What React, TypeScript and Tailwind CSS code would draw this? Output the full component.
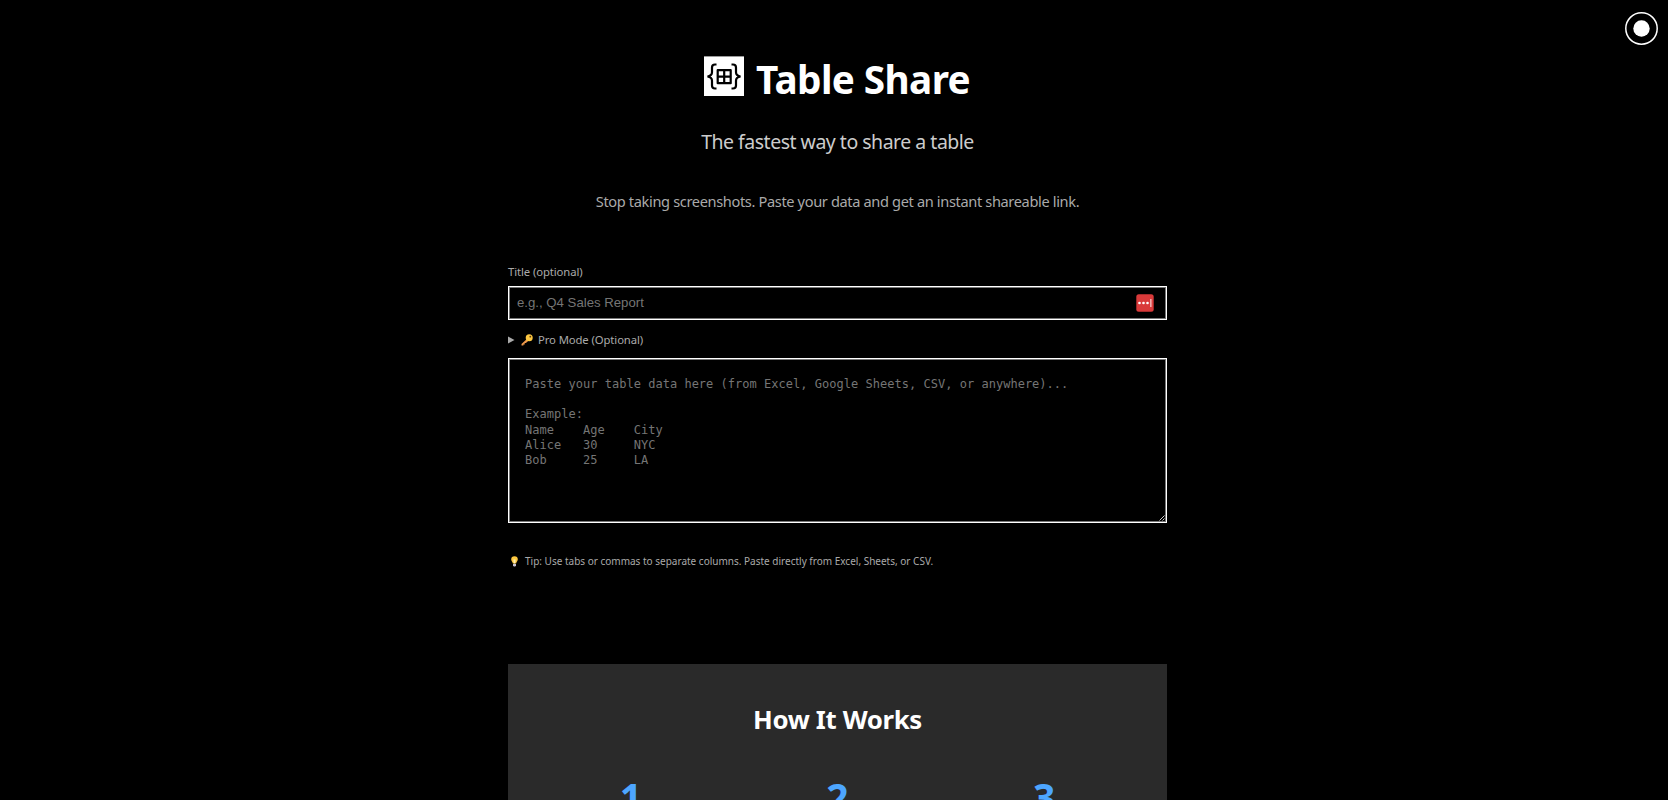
const steps = ["1", "2", "3"];

const placeholder = `Paste your table data here (from Excel, Google Sheets, CSV, or anywhere)...

Example:
Name    Age    City
Alice   30     NYC
Bob     25     LA`;

function Logo() {
  return (
    <svg className="block h-10 w-10 shrink-0" viewBox="0 0 40 40" fill="none" stroke="#000" aria-hidden="true">
      <rect y=".4" width="40" height="39.600" fill="#fff" stroke="none" />
      <path d="M12.500 8.500h-1.500c-2 0-3 1-3 3v4.800c0 2.200-1.500 3.700-4.500 4.200c3 .5 4.500 2 4.500 4.200v4.800c0 2 1 3 3 3h1.500" strokeWidth="2.200" />
      <path d="M27.500 8.500h1.500c2 0 3 1 3 3v4.800c0 2.200 1.500 3.700 4.500 4.200c-3 .5-4.500 2-4.500 4.200v4.800c0 2-1 3-3 3h-1.500" strokeWidth="2.200" />
      <path d="M13.700 14.200h13v13h-13zM20.200 14.200v13M13.700 20.700h13" strokeWidth="2.200" strokeLinejoin="round" />
    </svg>
  );
}

function KeyIcon() {
  return (
    <svg className="block h-3 w-3 shrink-0" viewBox="0 0 12 12" aria-hidden="true">
      <path d="M5.600 5.200L.500 10v1.600h1.900v-1.200h1.300v-1.300h1.200L7.200 7z" fill="#f09a4c" />
      <circle cx="8.200" cy="3.800" r="3.500" fill="#fcc741" />
      <circle cx="9.300" cy="2.700" r=".9" fill="#5a3a10" />
    </svg>
  );
}

function BulbIcon() {
  return (
    <svg className="block h-[11px] w-[7px] shrink-0" viewBox="0 0 7 11" aria-hidden="true">
      <path d="M3.500 .2a3.300 3.300 0 0 0-3.300 3.300c0 1.700 1.500 2.400 1.700 4.100h3.200c.2-1.700 1.700-2.400 1.700-4.100A3.300 3.300 0 0 0 3.500 .2z" fill="#fdc840" />
      <path d="M2.400 3.500h2.200L4.200 7.500H2.800z" fill="#fff0b0" />
      <path d="M2 8h3v1.600l-.8 1H2.800L2 9.600z" fill="#c9c2d6" />
    </svg>
  );
}

export default function App() {
  return (
    <div className="relative h-[800px] w-full overflow-hidden bg-black pt-14 font-['Noto_Sans',sans-serif] text-[#aaa]">
      <button aria-label="Toggle theme" className="absolute top-[11.500px] right-[10.500px] block h-[33px] w-[33px]">
        <svg className="block" width="33" height="33" viewBox="0 0 33 33" fill="none">
          <circle cx="16.500" cy="16.500" r="15.700" stroke="#fff" strokeWidth="1.500" />
          <circle cx="16.500" cy="16.500" r="8.200" fill="#fff" />
        </svg>
      </button>
      <main className="ml-[508px] flex w-[659px] flex-col whitespace-nowrap">
        <header className="flex flex-col items-center">
          <div className="flex h-10 items-start gap-3 pr-px">
            <Logo />
            <h1 className="mt-[3px] text-[38.700px] leading-10 font-bold tracking-[-0.600px] text-white">Table Share</h1>
          </div>
          <p className="mt-8 text-[19.500px] leading-7 tracking-[-0.500px] text-[#ccc]">The fastest way to share a table</p>
          <p className="mt-[34px] text-[14.600px] leading-[22px] tracking-[-0.360px]">
            Stop taking screenshots. Paste your data and get an instant shareable link.
          </p>
        </header>
        <label className="mt-[52px] text-[11.300px] leading-4 tracking-[-0.100px]">Title (optional)</label>
        <div className="mt-1.5 flex h-[34px] items-center justify-between border border-white pr-3 pl-2 shadow-[inset_0_0_0_1px_#777]">
          <span className="font-['Liberation_Sans',sans-serif] text-[13.200px] leading-4 text-[#757575]">e.g., Q4 Sales Report</span>
          <svg className="block" width="18" height="18" viewBox="0 0 18 18" aria-hidden="true">
            <rect x=".3" y=".3" width="17.400" height="17.400" rx="2.500" fill="#d93a3a" />
            <circle cx="3.500" cy="9" r="1.300" fill="#fff" />
            <circle cx="7.500" cy="9" r="1.300" fill="#fff" />
            <circle cx="11.500" cy="9" r="1.300" fill="#fff" />
            <rect x="14.200" y="5" width="1.300" height="8" fill="#f5c4c4" />
          </svg>
        </div>
        <div className="mt-3 flex h-4 items-center">
          <svg className="block" width="7" height="8" viewBox="0 0 7 8" aria-hidden="true">
            <path d="M0 .5L6.500 4L0 7.500z" fill="#aaa" />
          </svg>
          <span className="ml-1.5"><KeyIcon /></span>
          <span className="ml-[5px] text-[11.300px] leading-4 tracking-[-0.100px]">Pro Mode (Optional)</span>
        </div>
        <div className="relative mt-[10px] h-[165px] border border-white px-4 pt-[18px] shadow-[inset_0_0_0_1px_#777]">
          <pre className="font-['DejaVu_Sans_Mono',monospace] text-[12px] leading-[15.200px] tracking-[0.020px] text-[#757575]">{placeholder}</pre>
          <svg className="absolute right-px bottom-px" width="6" height="6" viewBox="0 0 6 6" stroke="#ccc" aria-hidden="true">
            <path d="M.5 5.500L5.500 .5M3.500 5.500L5.500 3.500" />
          </svg>
        </div>
        <div className="mt-[30px] flex h-4 items-center pl-[3px]">
          <BulbIcon />
          <p className="ml-[7px] text-[10px] leading-4">
            Tip: Use tabs or commas to separate columns. Paste directly from Excel, Sheets, or CSV.
          </p>
        </div>
        <section className="mt-[95px] h-[300px] bg-[#2a2a2a] px-[26px] pt-[37px]">
          <h2 className="text-center text-[25.800px] leading-9 font-bold tracking-[-0.350px] text-white">How It Works</h2>
          <div className="mt-10 grid grid-cols-3 gap-[13px]">
            {steps.map((s) => (
              <div key={s} className="text-center text-[39px] leading-10 font-bold text-[#4da6ff]">{s}</div>
            ))}
          </div>
        </section>
      </main>
    </div>
  );
}
